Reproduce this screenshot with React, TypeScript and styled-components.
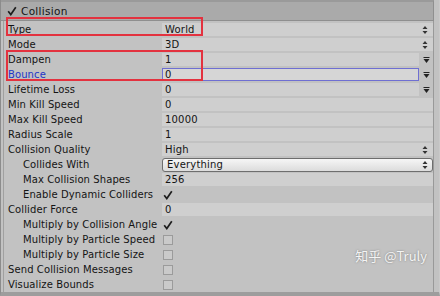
import React from "react";
import styled, { createGlobalStyle } from "styled-components";

type Kind = "popup" | "float" | "curve" | "check" | "button";

interface RowData {
  label: string;
  value?: string;
  kind: Kind;
  indent?: boolean;
  checked?: boolean;
  focused?: boolean;
  blue?: boolean;
}

const rows: RowData[] = [
  { label: "Type", value: "World", kind: "popup" },
  { label: "Mode", value: "3D", kind: "popup" },
  { label: "Dampen", value: "1", kind: "curve" },
  { label: "Bounce", value: "0", kind: "curve", focused: true, blue: true },
  { label: "Lifetime Loss", value: "0", kind: "curve" },
  { label: "Min Kill Speed", value: "0", kind: "float" },
  { label: "Max Kill Speed", value: "10000", kind: "float" },
  { label: "Radius Scale", value: "1", kind: "float" },
  { label: "Collision Quality", value: "High", kind: "popup" },
  { label: "Collides With", value: "Everything", kind: "button", indent: true },
  { label: "Max Collision Shapes", value: "256", kind: "float", indent: true },
  { label: "Enable Dynamic Colliders", kind: "check", checked: true, indent: true },
  { label: "Collider Force", value: "0", kind: "float" },
  { label: "Multiply by Collision Angle", kind: "check", checked: true, indent: true },
  { label: "Multiply by Particle Speed", kind: "check", indent: true },
  { label: "Multiply by Particle Size", kind: "check", indent: true },
  { label: "Send Collision Messages", kind: "check" },
  { label: "Visualize Bounds", kind: "check" },
];

const GlobalStyle = createGlobalStyle`
  html, body {
    margin: 0;
    padding: 0;
    background: #a3a3a3;
  }
`;

const Tick = () => (
  <svg width="10" height="10" viewBox="0 0 10 10">
    <path d="M1.2 5.2 L3.8 8.6 L8.8 1.2" stroke="#1e1e1e" strokeWidth="1.7" fill="none" />
  </svg>
);

const UpDown = () => (
  <svg width="6" height="10" viewBox="0 0 6 10">
    <path d="M0.5 4 L3 1 L5.5 4 Z M0.5 6 L3 9 L5.5 6 Z" fill="#333" />
  </svg>
);

const DownArrow = () => (
  <svg width="7" height="8" viewBox="0 0 7 8">
    <rect x="0.5" y="1" width="6" height="1" fill="#222" />
    <path d="M0.5 3 L6.5 3 L3.5 7 Z" fill="#222" />
  </svg>
);

const Value: React.FC<{ row: RowData }> = ({ row }) => {
  if (row.kind === "check") {
    return (
      <CheckCell>{row.checked ? <Tick /> : <EmptyBox />}</CheckCell>
    );
  }
  if (row.kind === "button") {
    return (
      <PopupButton>
        <span>{row.value}</span>
        <UpDown />
      </PopupButton>
    );
  }
  if (row.kind === "curve") {
    return (
      <CurveCell>
        <Field $focused={row.focused}>{row.value}</Field>
        <ArrowSlot>
          <DownArrow />
        </ArrowSlot>
      </CurveCell>
    );
  }
  return (
    <Field>
      <span>{row.value}</span>
      {row.kind === "popup" && <UpDown />}
    </Field>
  );
};

const App: React.FC = () => {
  return (
    <>
      <GlobalStyle />
      <Panel>
        <Header>
          <Tick />
          <HeaderTitle>Collision</HeaderTitle>
        </Header>
        <Body>
          {rows.map((row) => (
            <Row key={row.label}>
              <Label $indent={row.indent} $blue={row.blue}>
                {row.label}
              </Label>
              <Value row={row} />
            </Row>
          ))}
          <Mark style={{ top: -4, height: 15 }} />
          <Mark style={{ top: 29, height: 27 }} />
          <Watermark>知乎 @Truly</Watermark>
        </Body>
      </Panel>
    </>
  );
};

export default App;

const Panel = styled.div`
  width: 440px;
  height: 296px;
  background: #c2c2c2;
  display: flex;
  flex-direction: column;
  font-family: "DejaVu Sans", "Noto Sans CJK SC", sans-serif;
  font-size: 10px;
  color: #141414;
  overflow: hidden;
  box-sizing: border-box;
  border-left: 1px solid #8c8c8c;
  border-right: 1px solid #c9c9c9;
  border-bottom: 4px solid #9d9d9d;
`;

const Header = styled.div`
  height: 18px;
  flex: none;
  display: flex;
  align-items: center;
  gap: 4px;
  padding-left: 6px;
  background: #aaaaaa;
  border-top: 2px solid #9a9a9a;
  border-bottom: 1px solid #8f8f8f;
  margin-right: 5px;
  border-right: 1px solid #8f8f8f;
`;

const HeaderTitle = styled.span`
  font-size: 10.5px;
  letter-spacing: 0.3px;
`;

const Body = styled.div`
  position: relative;
  flex: 1;
  display: flex;
  flex-direction: column;
  padding-top: 1px;
  margin-left: 2px;
  margin-right: 5px;
  border-left: 1px solid #a0a0a0;
  border-right: 1px solid #999999;
  border-bottom: 1px solid #8c8c8c;
`;

const Row = styled.div`
  height: 15px;
  flex: none;
  display: grid;
  grid-template-columns: 158px 1fr;
  align-items: center;
`;

const Label = styled.span<{ $indent?: boolean; $blue?: boolean }>`
  padding-left: ${(p) => (p.$indent ? 19 : 4)}px;
  color: ${(p) => (p.$blue ? "#2335c8" : "#141414")};
  letter-spacing: 0.1px;
  white-space: nowrap;
`;

const Field = styled.div<{ $focused?: boolean }>`
  height: 13px;
  box-sizing: border-box;
  display: flex;
  align-items: center;
  justify-content: space-between;
  padding: 0 4px 0 2px;
  background: ${(p) => (p.$focused ? "#d6d6d6" : "#cfcfcf")};
  border: 1px solid ${(p) => (p.$focused ? "#6f6fd2" : "transparent")};
  letter-spacing: 0.2px;
`;

const CurveCell = styled.div`
  display: grid;
  grid-template-columns: 1fr 14px;
  align-items: center;
`;

const ArrowSlot = styled.div`
  display: flex;
  justify-content: center;
`;

const CheckCell = styled.div`
  display: flex;
  align-items: center;
  padding-left: 1px;
`;

const EmptyBox = styled.div`
  width: 8px;
  height: 8px;
  border: 1px solid #9b9b9b;
  background: #cacaca;
`;

const PopupButton = styled.div`
  height: 14px;
  box-sizing: border-box;
  display: flex;
  align-items: center;
  justify-content: space-between;
  padding: 0 4px 0 4px;
  background: linear-gradient(#f6f6f6, #dcdcdc);
  border: 1px solid #6e6e6e;
  border-radius: 3px;
  letter-spacing: 0.2px;
`;

const Mark = styled.div`
  position: absolute;
  left: 2px;
  width: 193px;
  border: 2px solid #e3323f;
  pointer-events: none;
`;

const Watermark = styled.div`
  position: absolute;
  right: 6px;
  bottom: 27px;
  color: #f4f4f4;
  font-family: "Noto Sans CJK SC", sans-serif;
  font-size: 13px;
  text-shadow: 0 0 2px #777;
`;
